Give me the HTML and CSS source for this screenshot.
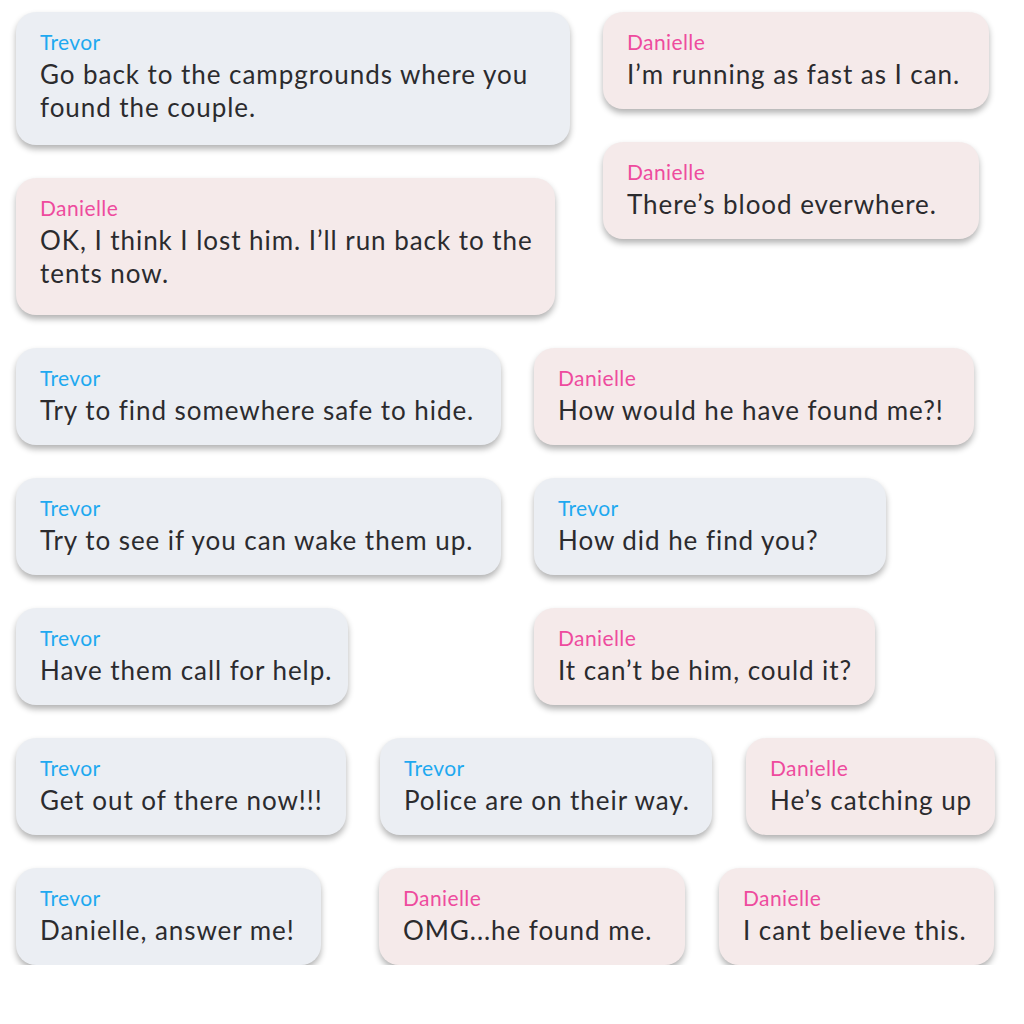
FILE: index.html
```html
<!DOCTYPE html>
<html>
<head>
<meta charset="utf-8">
<link rel="stylesheet" href="styles.css">
</head>
<body>
<div class="sheet">
  <div class="top">
    <div class="col">
      <div class="bubble trevor two" style="width:554px"><div class="name">Trevor</div><div class="msg">Go back to the campgrounds where you found the couple.</div></div>
      <div class="bubble danielle two tall" style="width:539px"><div class="name">Danielle</div><div class="msg">OK, I think I lost him. I’ll run back to the tents now.</div></div>
    </div>
    <div class="col">
      <div class="bubble danielle" style="width:386px"><div class="name">Danielle</div><div class="msg">I’m running as fast as I can.</div></div>
      <div class="bubble danielle" style="width:376px"><div class="name">Danielle</div><div class="msg">There’s blood everwhere.</div></div>
    </div>
  </div>
  <div class="row">
    <div class="bubble trevor" style="width:485px"><div class="name">Trevor</div><div class="msg">Try to find somewhere safe to hide.</div></div>
    <div class="bubble danielle" style="width:440px"><div class="name">Danielle</div><div class="msg">How would he have found me?!</div></div>
  </div>
  <div class="row">
    <div class="bubble trevor" style="width:485px"><div class="name">Trevor</div><div class="msg">Try to see if you can wake them up.</div></div>
    <div class="bubble trevor" style="width:352px"><div class="name">Trevor</div><div class="msg">How did he find you?</div></div>
  </div>
  <div class="row">
    <div class="bubble trevor" style="width:332px"><div class="name">Trevor</div><div class="msg">Have them call for help.</div></div>
    <div class="bubble danielle push" style="width:341px"><div class="name">Danielle</div><div class="msg">It can’t be him, could it?</div></div>
  </div>
  <div class="row tight">
    <div class="bubble trevor" style="width:330px"><div class="name">Trevor</div><div class="msg">Get out of there now!!!</div></div>
    <div class="bubble trevor" style="width:332px"><div class="name">Trevor</div><div class="msg">Police are on their way.</div></div>
    <div class="bubble danielle" style="width:249px"><div class="name">Danielle</div><div class="msg">He’s catching up</div></div>
  </div>
  <div class="row tight">
    <div class="bubble trevor" style="width:305px"><div class="name">Trevor</div><div class="msg">Danielle, answer me!</div></div>
    <div class="bubble danielle wide-gap" style="width:306px"><div class="name">Danielle</div><div class="msg">OMG...he found me.</div></div>
    <div class="bubble danielle" style="width:275px"><div class="name">Danielle</div><div class="msg">I cant believe this.</div></div>
  </div>
</div>
</body>
</html>
```
FILE: styles.css
```css
html, body {
  margin: 0;
  padding: 0;
  background: #ffffff;
}
body {
  font-family: Lato, "Noto Sans", sans-serif;
  color: #2b2b2e;
}
.sheet {
  padding: 12px 0 0 16px;
  display: flex;
  flex-direction: column;
  gap: 33px;
}
.top {
  display: flex;
  gap: 33px;
  align-items: flex-start;
}
.col {
  display: flex;
  flex-direction: column;
  gap: 33px;
}
.row {
  display: flex;
  gap: 33px;
  align-items: flex-start;
}
.row.tight {
  gap: 34px;
}
.bubble {
  box-sizing: border-box;
  border-radius: 20px;
  padding: 17px 8px 19px 24px;
  box-shadow: 0 4px 6px rgba(0, 0, 0, 0.3);
}
.bubble.two {
  padding-bottom: 21px;
}
.bubble.two.tall {
  padding-bottom: 25px;
}
.bubble.two .msg {
  line-height: 33px;
  white-space: normal;
}
.bubble.trevor {
  background: #ebeef3;
}
.bubble.danielle {
  background: #f5eaea;
}
.name {
  font-size: 21px;
  line-height: 26px;
  letter-spacing: 0.4px;
  margin-bottom: 3px;
}
.trevor .name {
  color: #1fa9f0;
}
.danielle .name {
  color: #ee4b9e;
}
.msg {
  font-size: 26px;
  line-height: 32px;
  letter-spacing: 0.95px;
  white-space: nowrap;
}
.push {
  margin-left: 153px;
}
.wide-gap {
  margin-left: 24px;
}
```
